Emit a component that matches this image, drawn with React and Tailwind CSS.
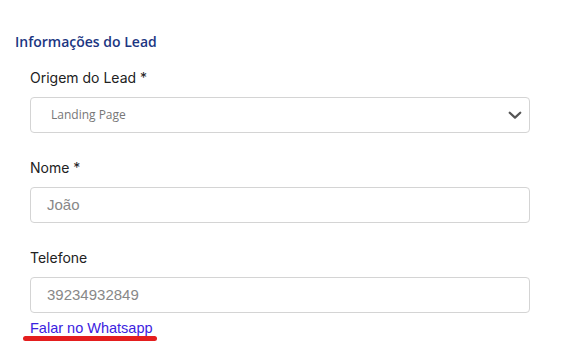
import React from 'react';

function Field({ label, required, children }) {
  return (
    <div className="flex flex-col">
      <label className="mb-[9px] text-[14px] leading-[20px] text-[#222]">
        {label}
        {required && ' *'}
      </label>
      {children}
    </div>
  );
}

export default function App() {
  return (
    <div
      className="min-h-screen w-[561px] bg-white pt-[32px]"
      style={{ fontFamily: 'Inter, "Liberation Sans", sans-serif' }}
    >
      <h2
        className="pl-[15px] text-[14px] font-semibold leading-[20px] text-[#1c3682]"
        style={{ fontFamily: '"Open Sans", sans-serif' }}
      >
        Informações do Lead
      </h2>

      <div className="mt-[16px] flex flex-col gap-[25px] pl-[30px] pr-[31px]">
        <Field label="Origem do Lead" required>
          <div className="flex h-[36px] items-center justify-between rounded-[4px] border border-[#d4d4d4] bg-white pl-[20px] pr-[5px]">
            <span className="text-[12px] text-[#777]" style={{ fontFamily: '"Open Sans", sans-serif' }}>
              Landing Page
            </span>
            <svg width="18" height="18" viewBox="0 0 24 24" fill="none" stroke="#555" strokeWidth="3" strokeLinecap="round" strokeLinejoin="round">
              <path d="M5 9l7 6.5 7-6.5" />
            </svg>
          </div>
        </Field>

        <Field label="Nome" required>
          <div className="flex h-[36px] items-center rounded-[4px] border border-[#d4d4d4] bg-white pl-[16px]">
            <span className="text-[15px] text-[#888]" style={{ fontFamily: '"Liberation Sans", sans-serif' }}>João</span>
          </div>
        </Field>

        <div className="flex flex-col">
          <Field label="Telefone">
            <div className="flex h-[36px] items-center rounded-[4px] border border-[#d4d4d4] bg-white pl-[16px]">
              <span className="text-[15px] text-[#888]" style={{ fontFamily: '"Liberation Sans", sans-serif' }}>39234932849</span>
            </div>
          </Field>
          <div className="relative mt-[2px] w-fit">
            <a className="text-[14.5px] leading-[20px] text-[#3b22e0]" href="#" style={{ fontFamily: '"Liberation Sans", sans-serif' }}>
              Falar no Whatsapp
            </a>
            <div className="absolute left-[-7px] right-[-4px] top-[21px] h-[5px] rounded-full bg-[#e41e1e]" />
          </div>
        </div>
      </div>
    </div>
  );
}
